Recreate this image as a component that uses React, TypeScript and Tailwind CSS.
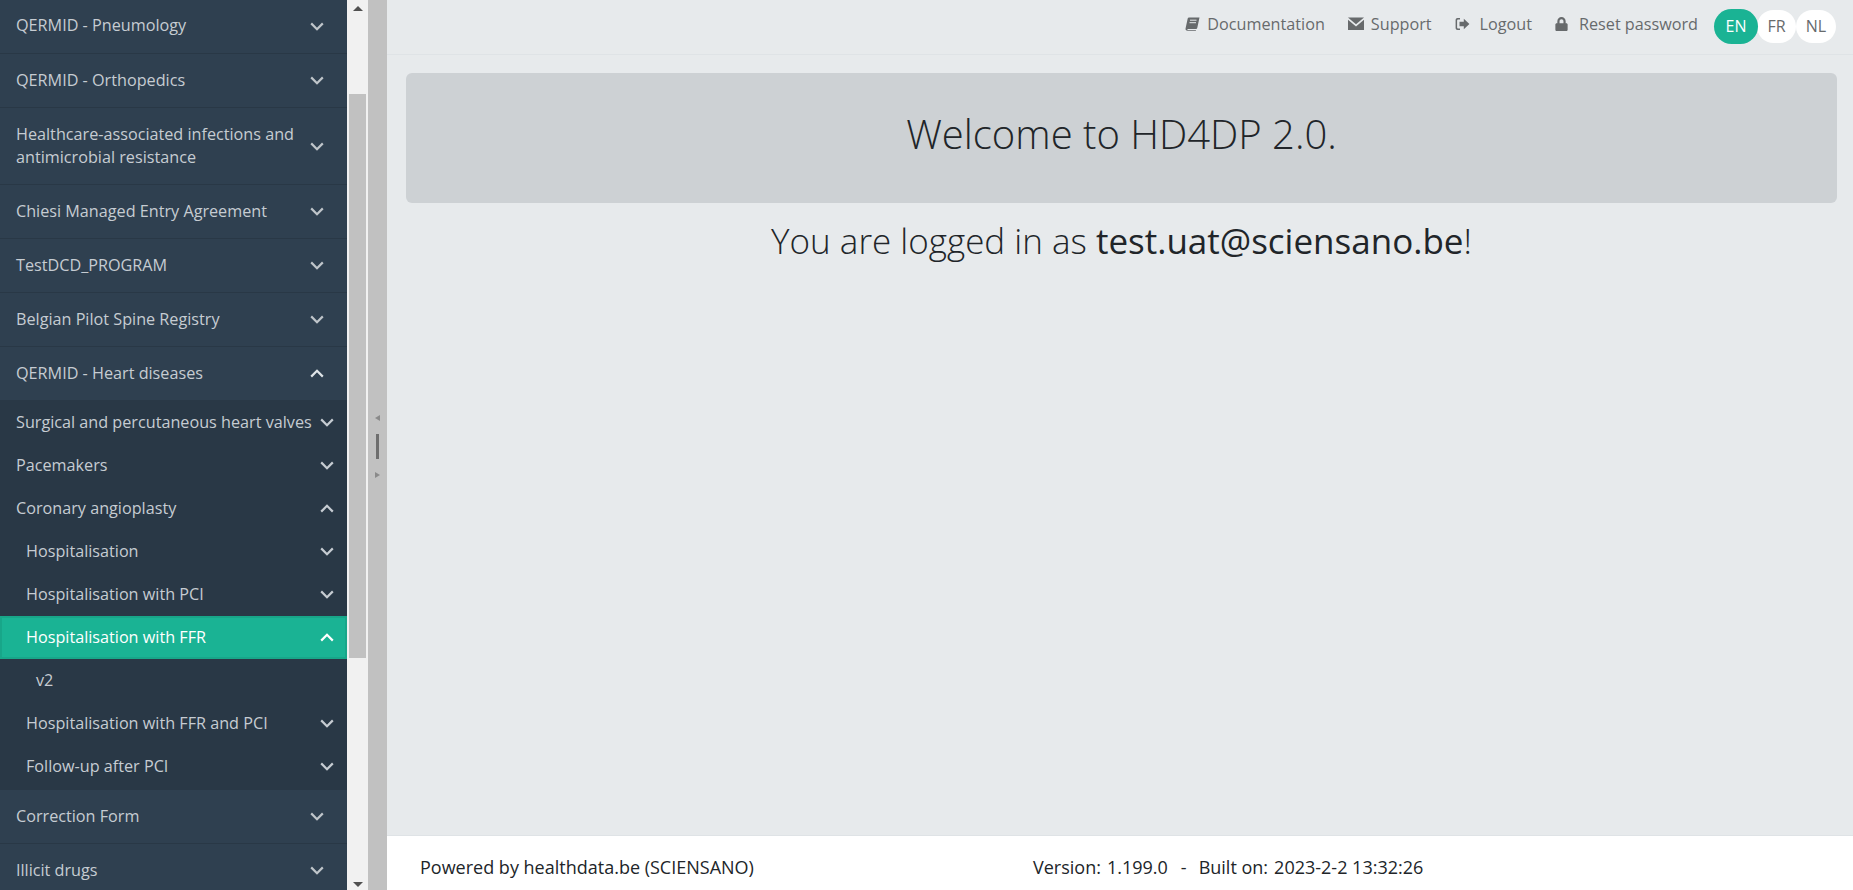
import { FaLock } from 'react-icons/fa';

function Chevron({ up, className }: { up?: boolean; className?: string }) {
  return (
    <svg className={className} width="14" height="9" viewBox="0 0 14 9" fill="none" stroke="currentColor" strokeWidth="2.2">
      <path d={up ? 'M1.2 7.6L7 1.8l5.8 5.8' : 'M1.2 1.4L7 7.2l5.8-5.8'} />
    </svg>
  );
}

function TopRow({ label, up, height = 'h-[54px]' }: { label: string; up?: boolean; height?: string }) {
  return (
    <div className={`${height} flex items-center justify-between pl-4 pr-[23px] bg-[#2f4050] border-b border-[#293846] text-[#c6ccd2]`}>
      <span className="text-[16.2px] leading-[23px] w-[290px] -mt-[1px]">{label}</span>
      <Chevron up={up} className={up ? 'text-[#dfe4e8]' : 'text-[#bfc5ca]'} />
    </div>
  );
}

function SubRow({ label, indent = 'pl-4', up, active, noIcon }: { label: string; indent?: string; up?: boolean; active?: boolean; noIcon?: boolean }) {
  return (
    <div
      className={`h-[43px] flex items-center justify-between ${
        active ? 'bg-[#1ab394] border-2 border-[#18a689] text-white pl-[24px] pr-[11px]' : `${indent} pr-[13px] text-[#c6ccd2]`
      }`}
    >
      <span className="text-[16.2px] whitespace-nowrap -mt-[1px]">{label}</span>
      {!noIcon && <Chevron up={up} />}
    </div>
  );
}

function Sidebar() {
  return (
    <div className="w-[347px] shrink-0 h-full overflow-hidden bg-[#293846]">
      {/* list is scrolled, first row is cut off a little at the top */}
      <div className="-mt-[1px]">
        <TopRow label="QERMID - Pneumology" height="h-[55px]" />
        <TopRow label="QERMID - Orthopedics" />
        <TopRow label="Healthcare-associated infections and antimicrobial resistance" height="h-[77px]" />
        <TopRow label="Chiesi Managed Entry Agreement" />
        <TopRow label="TestDCD_PROGRAM" />
        <TopRow label="Belgian Pilot Spine Registry" />
        <TopRow label="QERMID - Heart diseases" up />
        <div className="pb-[2px]">
          <SubRow label="Surgical and percutaneous heart valves" />
          <SubRow label="Pacemakers" />
          <SubRow label="Coronary angioplasty" up />
          <SubRow label="Hospitalisation" indent="pl-[26px]" />
          <SubRow label="Hospitalisation with PCI" indent="pl-[26px]" />
          <SubRow label="Hospitalisation with FFR" up active />
          <SubRow label="v2" indent="pl-9" noIcon />
          <SubRow label="Hospitalisation with FFR and PCI" indent="pl-[26px]" />
          <SubRow label="Follow-up after PCI" indent="pl-[26px]" />
        </div>
        <TopRow label="Correction Form" />
        <TopRow label="Illicit drugs" />
      </div>
    </div>
  );
}

function Scrollbar() {
  return (
    <div className="w-[21px] shrink-0 h-full bg-[#f1f1f1] flex flex-col items-center">
      <div className="h-[94px] w-full flex justify-center pt-[6px]">
        <div className="w-0 h-0 border-x-[5px] border-x-transparent border-b-[5px] border-b-[#505050]" />
      </div>
      <div className="w-[17px] h-[564px] bg-[#c1c1c1]" />
      <div className="flex-1" />
      <div className="w-0 h-0 border-x-[5px] border-x-transparent border-t-[5px] border-t-[#505050] mb-[3px]" />
    </div>
  );
}

function Splitter() {
  return (
    <div className="w-[19px] shrink-0 h-full bg-[#c1c1c1] flex flex-col items-center justify-center gap-[8px] pt-[2px]">
      <div className="w-0 h-0 border-y-[3px] border-y-transparent border-r-[5px] border-r-[#8a8a8a] mb-[5px]" />
      <div className="w-[3px] h-[25px] bg-[#6e6e6e]" />
      <div className="w-0 h-0 border-y-[3px] border-y-transparent border-l-[5px] border-l-[#8a8a8a] mt-[5px]" />
    </div>
  );
}

function BookIcon() {
  return (
    <svg width="15" height="14" viewBox="0 0 15 14" fill="currentColor">
      <path d="M4 .5h10.500L12.300 10.800c-.2.8-.7 1.200-1.500 1.200H3c-.8 0-1 .9-.2 1H11l-.2.7H2.600C1 13.700.2 12.800.6 11.300L2.700 1.600C2.900.9 3.300.5 4 .5z" />
      <path d="M5 3.200h6.500M4.500 5.700H11" stroke="#e7eaec" strokeWidth="1" fill="none" />
    </svg>
  );
}

function EnvelopeIcon() {
  return (
    <svg width="16" height="13" viewBox="0 0 16 13" fill="currentColor">
      <path d="M0 .5h16L8 7.300z" />
      <path d="M0 2.700l8 6.800 8-6.800V13H0z" />
    </svg>
  );
}

function LogoutIcon() {
  return (
    <svg width="15" height="14" viewBox="0 0 15 14" fill="currentColor">
      <path d="M5 1H2.600C1.400 1 .6 1.900.6 3v8c0 1.100.8 2 2 2H5v-1.500H3c-.5 0-.9-.4-.9-.9V3.400c0-.5.4-.9.9-.9h2V1z" />
      <path d="M4.500 4.800h4.300V1.700L14.400 7l-5.600 5.300V9.200H4.500z" />
    </svg>
  );
}

function TopNav() {
  const linkClass = 'flex items-center text-[16.2px] text-[#676a6c]';
  return (
    <div className="h-[55px] shrink-0 flex items-center justify-end border-b border-[#dfe3e6] pr-[17px] pb-[4px]">
      <div className="flex items-center gap-[23px] mr-[16px] -mt-[2px]">
        <span className={`${linkClass} gap-[7px]`}>
          <BookIcon />
          Documentation
        </span>
        <span className={`${linkClass} gap-[7px]`}>
          <EnvelopeIcon />
          Support
        </span>
        <span className={`${linkClass} gap-[10px]`}>
          <LogoutIcon />
          Logout
        </span>
        <span className={`${linkClass} gap-[11px]`}>
          <FaLock className="w-[13px] h-[14px]" />
          Reset password
        </span>
      </div>
      <div className="flex items-center text-[16px] mt-[2px]">
        <span className="w-[44px] h-[35px] rounded-full bg-[#1ab394] text-white flex items-center justify-center z-10">EN</span>
        <span className="w-[39px] h-[33px] -ml-[1px] rounded-full bg-white text-[#676a6c] flex items-center justify-center">FR</span>
        <span className="w-[40px] h-[33px] rounded-full bg-white text-[#676a6c] flex items-center justify-center">NL</span>
      </div>
    </div>
  );
}

export default function App() {
  return (
    <div className="flex w-full h-[890px] overflow-hidden font-['Open_Sans',sans-serif] bg-[#e7eaec]">
      <Sidebar />
      <Scrollbar />
      <Splitter />
      <div className="flex-1 min-w-0 h-full flex flex-col">
        <TopNav />
        <div className="flex-1 pt-[18px] pl-[19px] pr-[16px]">
          <div className="h-[130px] rounded-[6px] bg-[#cdd1d4] flex items-center justify-center pb-[9px]">
            <h1 className="text-[40px] font-light text-[#212529]">Welcome to HD4DP 2.0.</h1>
          </div>
          <p className="mt-[12px] text-center text-[35px] font-light text-[#212529]">
            You are logged in as <span className="font-normal">test.uat@sciensano.be</span>!
          </p>
        </div>
        <div className="h-[55px] shrink-0 bg-white border-t border-[#dfe3e6] flex items-center pl-[33px] pt-[8px] text-[18px] text-[#212529]">
          <span className="w-[613px]">Powered by healthdata.be (SCIENSANO)</span>
          <span className="flex">
            <span>Version:</span>
            <span className="ml-[6px]">1.199.0</span>
            <span className="ml-[13px]">-</span>
            <span className="ml-[12px]">Built on:</span>
            <span className="ml-[6px]">2023-2-2 13:32:26</span>
          </span>
        </div>
      </div>
    </div>
  );
}
